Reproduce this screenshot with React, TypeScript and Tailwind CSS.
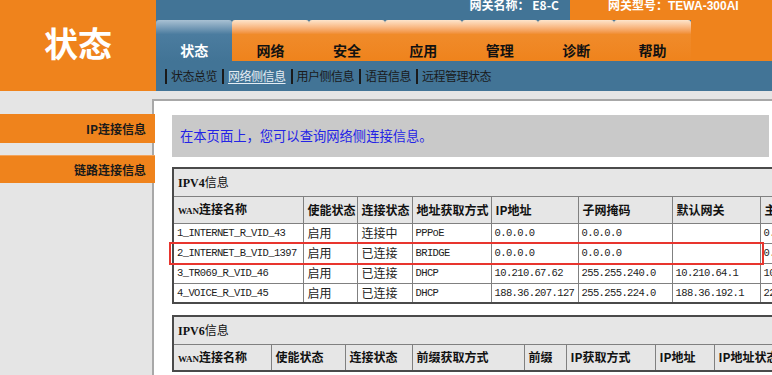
const tabs = ["状态", "网络", "安全", "应用", "管理", "诊断", "帮助"];
const subNav = ["状态总览", "网络侧信息", "用户侧信息", "语音信息", "远程管理状态"];

type Head = { label: string; wan?: boolean; w: string };

const ipv4Head: Head[] = [
  { label: "连接名称", wan: true, w: "w-[130px]" },
  { label: "使能状态", w: "w-[54px]" },
  { label: "连接状态", w: "w-[55px]" },
  { label: "地址获取方式", w: "w-[79px]" },
  { label: "IP地址", w: "w-[87px]" },
  { label: "子网掩码", w: "w-[94px]" },
  { label: "默认网关", w: "w-[88px]" },
  { label: "主DNS", w: "w-[90px]" },
];

const ipv4Rows = [
  ["1_INTERNET_R_VID_43", "启用", "连接中", "PPPoE", "0.0.0.0", "0.0.0.0", "", "0.0.0.0"],
  ["2_INTERNET_B_VID_1397", "启用", "已连接", "BRIDGE", "0.0.0.0", "0.0.0.0", "", "0.0.0.0"],
  ["3_TR069_R_VID_46", "启用", "已连接", "DHCP", "10.210.67.62", "255.255.240.0", "10.210.64.1", "10.0.0.1"],
  ["4_VOICE_R_VID_45", "启用", "已连接", "DHCP", "188.36.207.127", "255.255.224.0", "188.36.192.1", "221.228.255.1"],
];

const ipv6Head: Head[] = [
  { label: "连接名称", wan: true, w: "w-[98px]" },
  { label: "使能状态", w: "w-[74px]" },
  { label: "连接状态", w: "w-[67px]" },
  { label: "前缀获取方式", w: "w-[112px]" },
  { label: "前缀", w: "w-[42px]" },
  { label: "IP获取方式", w: "w-[89px]" },
  { label: "IP地址", w: "w-[59px]" },
  { label: "IP地址状态", w: "w-[100px]" },
];

// ascii cells use the narrow mono face, chinese cells the cjk one
const isCjk = (s: string) => /[\u4e00-\u9fff]/.test(s);

function InfoTable({ title, head, rows, width }: { title: string; head: Head[]; rows: string[][]; width: string }) {
  return (
    <table className={`${width} table-fixed border-collapse border-2 border-[#4a4a4a] bg-white`}>
      <colgroup>
        {head.map((h) => (
          <col key={h.label} className={h.w} />
        ))}
      </colgroup>
      <thead>
        <tr className="h-[28px] bg-[#e6e6e6]">
          <th colSpan={head.length} className="border border-[#808080] pl-[4px] text-left font-normal text-[12px] text-[#111]">
            <span className="font-['Liberation_Serif'] font-bold">{title}</span>信息
          </th>
        </tr>
        <tr className="h-[27px] bg-[#e6e6e6]">
          {head.map((h) => (
            <th
              key={h.label}
              className="border border-[#808080] pl-[4px] text-left align-middle font-bold text-[12px] text-[#111] whitespace-nowrap overflow-hidden"
            >
              {h.wan && <span className="font-['Liberation_Serif'] text-[9px] font-bold">WAN</span>}
              {h.label}
            </th>
          ))}
        </tr>
      </thead>
      <tbody>
        {rows.map((r, i) => (
          <tr key={i} className="h-[20px]">
            {r.map((c, j) => (
              <td
                key={j}
                className={
                  isCjk(c)
                    ? "border border-[#808080] pl-[4px] text-[12px] leading-[18px] text-[#222] whitespace-nowrap overflow-hidden"
                    : "border border-[#808080] pl-[3px] font-['Liberation_Mono',monospace] text-[10.5px] leading-[18px] tracking-[-0.6px] text-[#222] whitespace-nowrap overflow-hidden"
                }
              >
                {c}
              </td>
            ))}
          </tr>
        ))}
      </tbody>
    </table>
  );
}

export default function App() {
  return (
    <div className="relative w-[772px] h-[375px] overflow-hidden bg-[#e5e5e5] font-['Noto_Sans_CJK_SC',sans-serif]">
      {/* header */}
      <div className="flex h-[91px]">
        <div className="w-[156px] bg-[#ef831c] flex items-center justify-center pb-[6px]">
          <span className="text-white font-bold text-[34px] leading-none">状态</span>
        </div>
        <div className="flex-1 bg-[#427496] flex flex-col">
          <div className="h-[20px] flex">
            <div className="flex-1 flex justify-end pr-[11px]">
              <span className="-mt-[1px] text-white font-bold text-[12px] leading-[12px]">网关名称： E8-C</span>
            </div>
            <div className="w-[202px] bg-[#ef831c] pl-[38px]">
              <span className="block -mt-[1px] text-white font-bold text-[12px] leading-[12px]">
                网关型号：<span className="font-['Liberation_Sans']">TEWA-300AI</span>
              </span>
            </div>
          </div>
          <div className="h-[41px] flex">
            {tabs.map((t, i) => (
              <div
                key={t}
                className={
                  i === 0
                    ? "w-[76.4px] rounded-t-[3px] bg-linear-to-b from-[#a9c1d3] via-[#4b7c9f] via-35% to-[#427496] flex items-end justify-center pb-[4px] text-white font-bold text-[14px] leading-none"
                    : "w-[76.4px] rounded-t-[3px] bg-linear-to-b from-[#fde5cc] via-[#f08b2a] via-35% to-[#ef831c] flex items-end justify-center pb-[4px] text-[#111] font-bold text-[14px] leading-none"
                }
              >
                {t}
              </div>
            ))}
            <div className="flex-1 bg-[#ef831c]" />
          </div>
          <div className="h-[30px] flex items-center pl-[9px] text-[12px] tracking-[-0.5px]">
            {subNav.map((s, i) => (
              <div key={s} className="flex items-center">
                <span className="w-[2px] h-[15px] bg-[#1a1a1a]" />
                <span
                  className={
                    i === 1
                      ? "ml-[4px] mr-[5px] text-[#e4ecf3] underline underline-offset-2"
                      : "ml-[4px] mr-[5px] text-[#1a1a1a]"
                  }
                >
                  {s}
                </span>
              </div>
            ))}
          </div>
        </div>
      </div>

      {/* body */}
      <div className="flex h-[284px]">
        <div className="w-[152px] shrink-0 pt-[23px] flex flex-col gap-[12px]">
          <div className="relative z-10 w-[155px] h-[29px] bg-[#ef831c] flex items-center justify-end pr-[9px] font-bold text-[12px] text-[#1a1a1a]">
            IP连接信息
          </div>
          <div className="relative z-10 w-[155px] h-[28px] bg-[#ef831c] border-t border-[#f3a45c] flex items-center justify-end pr-[9px] font-bold text-[12px] text-[#1a1a1a]">
            链路连接信息
          </div>
        </div>
        <div className="flex-1 pt-[8px]">
          <div className="h-full bg-white border-t-2 border-l-2 border-[#a8a8a8] pl-[18px] pt-[14px]">
            <div className="w-[597px] h-[42px] bg-[#c9c9c9] flex items-center pl-[8px] text-[13.3px] text-[#2323e6]">
              在本页面上，您可以查询网络侧连接信息。
            </div>
            <div className="mt-[10px]">
              <InfoTable title="IPV4" head={ipv4Head} rows={ipv4Rows} width="w-[677px]" />
            </div>
            <div className="mt-[11px]">
              <InfoTable title="IPV6" head={ipv6Head} rows={[]} width="w-[641px]" />
            </div>
          </div>
        </div>
      </div>

      {/* red highlight around the bridge row */}
      <div className="absolute left-[169px] top-[242px] w-[595px] h-[23px] border-2 border-[#e8352e]" />
    </div>
  );
}
